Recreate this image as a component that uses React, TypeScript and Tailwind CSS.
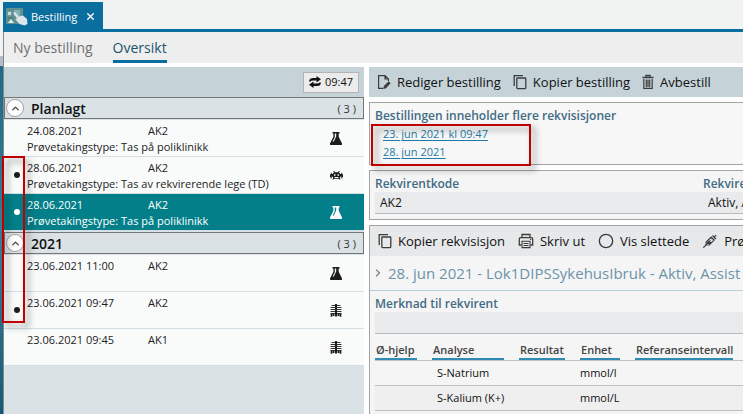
import React, { useState } from 'react';
import { X, ChevronUp, ChevronRight, Circle } from 'lucide-react';

type Kind = 'flask' | 'bug' | 'ribs';

interface Order {
  id: number;
  date: string;
  code: string;
  note?: string;
  kind: Kind;
  marked?: boolean;
}

interface OrderGroup {
  title: string;
  orders: Order[];
}

const GROUPS: OrderGroup[] = [
  {
    title: 'Planlagt',
    orders: [
      { id: 1, date: '24.08.2021', code: 'AK2', note: 'Prøvetakingstype: Tas på poliklinikk', kind: 'flask' },
      { id: 2, date: '28.06.2021', code: 'AK2', note: 'Prøvetakingstype: Tas av rekvirerende lege (TD)', kind: 'bug', marked: true },
      { id: 3, date: '28.06.2021', code: 'AK2', note: 'Prøvetakingstype: Tas på poliklinikk', kind: 'flask', marked: true },
    ],
  },
  {
    title: '2021',
    orders: [
      { id: 4, date: '23.06.2021 11:00', code: 'AK2', kind: 'flask' },
      { id: 5, date: '23.06.2021 09:47', code: 'AK2', kind: 'ribs', marked: true },
      { id: 6, date: '23.06.2021 09:45', code: 'AK1', kind: 'ribs' },
    ],
  },
];

const ANALYSES = [
  { name: 'S-Natrium', unit: 'mmol/l' },
  { name: 'S-Kalium (K+)', unit: 'mmol/L' },
  { name: '', unit: '' },
];

const FlaskIcon = () => (
  <svg viewBox="0 0 12 13" className="w-[12px] h-[13px]" fill="currentColor">
    <path fillRule="evenodd" d="M2.500 0h7v1.600H8.700V4.800L12 11.600Q12.300 13 11 13H1Q-.3 13 0 11.600L3.400 4.800V1.600H2.500zM4.800 1.600V5.200L2.600 9.600 3.800 9.400 6.200 4.600V1.600z" />
  </svg>
);

const BugIcon = () => (
  <svg viewBox="0 0 13 9" className="w-[13px] h-[9px]" fill="currentColor">
    <path
      fillRule="evenodd"
      d="M3.200 0h1l.8 1.300h3L8.800 0h1l-.7 1.700L10.500 3H11.300V1.800h.9V3.200H13v3h-.8V7.500h-.9V5.500H10.600L9.800 7l.8 1.500H9.500L8.600 7.800H4.400L3.500 8.500H2.400L3.200 7 2.400 5.500H1.700V7.500H.8V6.200H0v-3H.8V1.800h.9V3h.8l1.400-1.300zM4 3.200v1.600h1.500V3.200zM7.500 3.200v1.600H9V3.200zM4.500 6v.9h4V6z"
    />
  </svg>
);

const RibsIcon = () => (
  <svg viewBox="0 0 12 13" className="w-[12px] h-[13px]" fill="none" stroke="currentColor">
    <path d="M6 0V12.500" strokeWidth="2" />
    <path d="M1.500 1.500h9M.5 3.500h11M.5 5.500h11M.5 7.500h11M.5 9.500h11" strokeWidth="0.900" />
    <path d="M1.500 9.500V12.800M3.600 10v2M8.400 10v2M10.500 9.500V12.800" strokeWidth="1.700" />
  </svg>
);

const KindIcon = ({ kind }: { kind: Kind }) => {
  if (kind === 'flask') return <FlaskIcon />;
  if (kind === 'bug') return <BugIcon />;
  return <RibsIcon />;
};

const RefreshIcon = () => (
  <svg viewBox="0 0 12 12" className="w-[12px] h-[12px]" fill="currentColor">
    <path d="M0 5.500Q.3 2 4 2H7.500V0L12 3.300 7.500 6.400V4.500H4Q2 4.500 1.500 5.500z" />
    <path d="M12 6.500Q11.700 10 8 10H4.500V12L0 8.700 4.500 5.600V7.500H8Q10 7.500 10.500 6.500z" />
  </svg>
);

const EditIcon = () => (
  <svg viewBox="0 0 14 16" className="w-[14px] h-[16px]" fill="none" stroke="currentColor" strokeWidth="1.200">
    <path d="M6 14.400H1.600V1.600H8L11.400 5v2M8 1.600V5h3.400" />
    <path d="M6.200 15l.7-3L11.600 7.300l2 2L9 14.200z" fill="currentColor" stroke="none" />
  </svg>
);

const CopyIcon = () => (
  <svg viewBox="0 0 14 16" className="w-[14px] h-[16px]" fill="none" stroke="currentColor" strokeWidth="1.300">
    <path d="M1.200 12V1.600H10" />
    <rect x="3.800" y="4" width="9" height="10.600" rx="0.800" />
  </svg>
);

const TrashIcon = () => (
  <svg viewBox="0 0 12 16" className="w-[12px] h-[16px]" fill="none" stroke="currentColor" strokeWidth="1.300">
    <path d="M0.500 3.500h11M4 3V1.500h4V3" />
    <path d="M1.800 5v9.300h8.400V5M4.300 5.500V13M6 5.500V13M7.700 5.500V13" strokeWidth="1.200" />
  </svg>
);

const PrinterIcon = () => (
  <svg viewBox="0 0 16 16" className="w-[16px] h-[16px]" fill="none" stroke="currentColor" strokeWidth="1.300">
    <path d="M4 4.500V1.500h8v3M3.500 12H1.300V6Q1.300 4.600 2.700 4.600h10.600Q14.700 4.600 14.700 6v6h-2.200" />
    <path d="M4 8.300h8v6.300H4zM5.500 10.500h5M5.500 12.500h5M12 6.500h1.300" strokeWidth="1.100" />
  </svg>
);

const SyringeIcon = () => (
  <svg viewBox="0 0 16 16" className="w-[16px] h-[16px]" fill="none" stroke="currentColor" strokeWidth="1.200">
    <path d="M1.300 14.700L4.500 11.500M10.500 2.500l3.500 3.500M12.200 4.200L14.200 2.200" />
    <path d="M4.200 11.800V9l5-5 3 3-5 5z" />
    <path d="M5 11V9.500L7 7.500l2.500 2L7.500 11z" fill="currentColor" stroke="none" />
    <path d="M7 6.500l1.500 1.500M8.600 5l1.500 1.500" strokeWidth="0.900" />
  </svg>
);

const AppIcon = () => (
  <svg viewBox="0 0 22 18" className="w-[22px] h-[18px]">
    <rect x="0" y="0" width="17" height="16" fill="#5f8f8f" />
    <path d="M2 4l3 3M5 4L2 7" stroke="#d5e6e6" strokeWidth="1.500" />
    <rect x="8" y="2" width="6" height="6" fill="#7fb2b8" />
    <rect x="2" y="9.500" width="5" height="1" fill="#40716f" />
    <path d="M2 15l3-4 3 4z" fill="#e3eeee" />
    <path d="M7.500 4.500q1-1 2.200.3l3 3.700 4.300-1 4 3.500.5 5-3 1.500-5-1.500-4-4.500q0-1.500 1.800-1L12 11.500 8 6.300q-1-.9-.5-1.800z" fill="#dce5ea" />
  </svg>
);

interface ToolButtonProps {
  icon: React.ReactNode;
  label: string;
}

const ToolButton = ({ icon, label }: ToolButtonProps) => (
  <button className="flex items-center gap-[6px] whitespace-nowrap text-[13px] leading-5 text-[#111]">
    <span className="text-[#3c3c3c]">{icon}</span>
    {label}
  </button>
);

interface OrderRowProps {
  order: Order;
  selected: boolean;
  onSelect: () => void;
}

const OrderRow = ({ order, selected, onSelect }: OrderRowProps) => (
  <li className={selected ? 'bg-[#037f89] text-white' : 'bg-[#f9fbfb] text-[#1c1c1c]'}>
    <button
      onClick={onSelect}
      className="flex h-[37px] w-full items-center border-b border-[#d3dfe5] text-left text-[11px] leading-4"
    >
      <span className="flex w-[23px] shrink-0 justify-center pl-[3px]">
        {order.marked && <span className="h-[6px] w-[6px] rounded-full bg-current" />}
      </span>
      <span className="flex min-w-0 flex-1 flex-col self-start whitespace-nowrap pt-[3px]">
        <span className="flex">
          <span className="w-[121px]">{order.date}</span>
          <span>{order.code}</span>
        </span>
        {order.note && <span>{order.note}</span>}
      </span>
      <span className="flex w-14 shrink-0 justify-center">
        <KindIcon kind={order.kind} />
      </span>
    </button>
  </li>
);

const OrderList = () => {
  const [selectedId, setSelectedId] = useState(3);
  const [closed, setClosed] = useState<string[]>([]);

  const toggle = (title: string) => {
    setClosed((prev) => (prev.includes(title) ? prev.filter((t) => t !== title) : [...prev, title]));
  };

  return (
    <section className="flex w-[360px] shrink-0 flex-col bg-[#dbe2e5]">
      <div className="flex h-[30px] shrink-0 items-center justify-end bg-[#c5d3d8] px-[5px]">
        <button className="flex h-[21px] items-center gap-1 border border-[#b4b4b4] bg-[#ececec] px-[5px] text-[11px] leading-4 text-[#111]">
          <RefreshIcon />
          09:47
        </button>
      </div>
      {GROUPS.map((group) => (
        <div key={group.title} className="mb-px">
          <button
            onClick={() => toggle(group.title)}
            className="mb-px flex h-[22px] w-full items-center border border-[#747678] bg-[#dbe2e5] pl-px pr-[7px]"
          >
            <span className="flex h-[18px] w-[18px] items-center justify-center rounded-full border border-[#a2a2a2] bg-white text-[#444]">
              <ChevronUp size={11} strokeWidth={3} />
            </span>
            <span className="ml-[7px] flex-1 pt-px text-left text-[14px] font-semibold leading-5 text-[#111]">{group.title}</span>
            <span className="pt-px text-[11px] leading-4 text-[#333]">( {group.orders.length} )</span>
          </button>
          {!closed.includes(group.title) && (
            <ul>
              {group.orders.map((order) => (
                <OrderRow
                  key={order.id}
                  order={order}
                  selected={order.id === selectedId}
                  onSelect={() => setSelectedId(order.id)}
                />
              ))}
            </ul>
          )}
        </div>
      ))}
    </section>
  );
};

const headCell = 'block border-b-2 border-[#2f8bb3] pl-px leading-4';

const AnalysisTable = () => (
  <table className="w-full table-fixed text-left text-[11px] text-[#111]">
    <colgroup>
      <col className="w-[57px]" />
      <col className="w-[87px]" />
      <col className="w-[61px]" />
      <col className="w-[55px]" />
      <col />
    </colgroup>
    <thead className="text-[#444]">
      <tr className="border-b border-[#bfc1c3] [&>th]:font-semibold">
        <th className="pr-[15px]"><span className={headCell}>Ø-hjelp</span></th>
        <th className="pr-[15px]"><span className={headCell}>Analyse</span></th>
        <th className="pr-[15px]"><span className={headCell}>Resultat</span></th>
        <th className="pr-[15px]"><span className={headCell}>Enhet</span></th>
        <th><span className={`${headCell} w-[98px]`}>Referanseintervall</span></th>
      </tr>
    </thead>
    <tbody>
      {ANALYSES.map((row, i) => (
        <tr key={i} className="h-[25px] border-b border-[#bfc1c3] even:bg-[#efefef]">
          <td />
          <td className="whitespace-nowrap pl-[5px]">{row.name}</td>
          <td />
          <td>{row.unit}</td>
          <td />
        </tr>
      ))}
    </tbody>
  </table>
);

const labelClass = 'text-[12px] font-semibold leading-4 text-[#426b84]';
const fieldClass = 'block w-full border-b border-[#b9bbbd] bg-[#e9eaeb] px-[5px] text-[12px] text-[#111] outline-none';

const Details = () => (
  <section className="flex min-w-0 flex-1 flex-col gap-[5px] overflow-hidden">
    <div className="flex h-[30px] shrink-0 items-center gap-3 bg-[#c5d3d8] pl-2">
      <ToolButton icon={<EditIcon />} label="Rediger bestilling" />
      <ToolButton icon={<CopyIcon />} label="Kopier bestilling" />
      <ToolButton icon={<TrashIcon />} label="Avbestill" />
    </div>

    <div className="relative h-[63px] shrink-0 border border-r-0 border-[#a3a3a3] bg-[#f7f7f7] px-[5px] pt-[5px]">
      <h2 className={labelClass}>Bestillingen inneholder flere rekvisisjoner</h2>
      <ul className="pl-2 pt-px text-[11px] leading-[18px] text-[#1d7ba6]">
        <li><a href="#r1" className="underline underline-offset-2">23. jun 2021 kl 09:47</a></li>
        <li><a href="#r2" className="underline underline-offset-2">28. jun 2021</a></li>
      </ul>
      <div className="pointer-events-none absolute left-px top-[21px] h-[42px] w-[160px] border-2 border-[#c00000] drop-shadow-[4px_4px_3px_rgba(0,0,0,0.45)]" />
    </div>

    <div className="flex h-[50px] shrink-0 border border-r-0 border-[#a3a3a3] bg-[#f5f5f5] pl-[5px] pt-[5px]">
      <div className="w-[328px] shrink-0">
        <label htmlFor="kode" className={`${labelClass} block`}>Rekvirentkode</label>
        <input id="kode" readOnly value="AK2" className={`${fieldClass} h-[22px]`} />
      </div>
      <div className="min-w-0 flex-1">
        <label htmlFor="status" className={`${labelClass} block`}>Rekvire</label>
        <input id="status" readOnly value="Aktiv, A" className={`${fieldClass} h-[22px] pr-0`} />
      </div>
    </div>

    <div className="flex-1 border border-b-0 border-r-0 border-[#a3a3a3] bg-[#f5f5f5]">
      <div className="flex h-[30px] items-center gap-[13px] bg-[#e6e8e9] pl-2">
        <ToolButton icon={<CopyIcon />} label="Kopier rekvisisjon" />
        <ToolButton icon={<PrinterIcon />} label="Skriv ut" />
        <ToolButton icon={<Circle size={16} strokeWidth={2} />} label="Vis slettede" />
        <ToolButton icon={<SyringeIcon />} label="Prø" />
      </div>
      <button className="flex h-[35px] w-full items-center gap-1 border-b border-[#b5cfde] pl-[2px] text-[#6c93aa]">
        <ChevronRight size={12} strokeWidth={3} className="shrink-0 text-[#8c8c8c]" />
        <span className="whitespace-nowrap text-[15px] leading-5">28. jun 2021 - Lok1DIPSSykehusIbruk - Aktiv, Assist</span>
      </button>
      <div className="pl-[5px] pt-[5px]">
        <label htmlFor="merknad" className={`${labelClass} block`}>Merknad til rekvirent</label>
        <input id="merknad" readOnly value="" className={`${fieldClass} mb-2 h-[22px]`} />
        <AnalysisTable />
      </div>
    </div>
  </section>
);

const App: React.FC = () => {
  const [view, setView] = useState('Oversikt');

  return (
    <div className="relative flex h-screen overflow-hidden bg-[#f1f2f2] font-['Open_Sans','Noto_Sans',sans-serif]">
      {/* Edge of the window behind */}
      <div className="flex w-[3px] shrink-0 flex-col">
        <div className="h-14 bg-[#f1f2f2]" />
        <div className="h-[10px] bg-[#b9bbc4]" />
        <div className="flex-1 bg-gradient-to-b from-[#1f6a86] via-[#3a7f98] to-[#175a74]" />
      </div>

      <div className="flex min-w-0 flex-1 flex-col">
        <header className="border-b-[3px] border-[#0a6e9f] pt-[2px]">
          <div className="flex h-[27px] w-[100px] items-center bg-[#0a6e9f] pl-[3px] pt-[2px] text-white">
            <AppIcon />
            <span className="ml-[3px] whitespace-nowrap text-[11px] leading-4">Bestilling</span>
            <button aria-label="Lukk" className="ml-2">
              <X size={11} strokeWidth={3} />
            </button>
          </div>
        </header>

        <div className="flex min-h-0 flex-1 flex-col border-l border-[#7f8a90] bg-white">
          <nav className="flex h-[31px] shrink-0 gap-5 bg-[#eeeeee] pl-[9px]">
            {['Ny bestilling', 'Oversikt'].map((name) => (
              <button
                key={name}
                onClick={() => setView(name)}
                className={
                  name === view
                    ? 'border-b-[3px] border-[#0a6e9f] pt-[3px] text-[14px] leading-5 text-[#19536f]'
                    : 'border-b-[3px] border-transparent pt-[3px] text-[14px] leading-5 text-[#707070]'
                }
              >
                {name}
              </button>
            ))}
          </nav>
          <main className="mt-1 flex min-h-0 flex-1 gap-[5px]">
            <OrderList />
            <Details />
          </main>
        </div>
      </div>

      {/* Frame round the markers in the list */}
      <div className="pointer-events-none absolute left-[2px] top-[156px] h-[167px] w-[23px] border-2 border-[#c00000] drop-shadow-[4px_4px_3px_rgba(0,0,0,0.45)]" />
    </div>
  );
};

export default App;
